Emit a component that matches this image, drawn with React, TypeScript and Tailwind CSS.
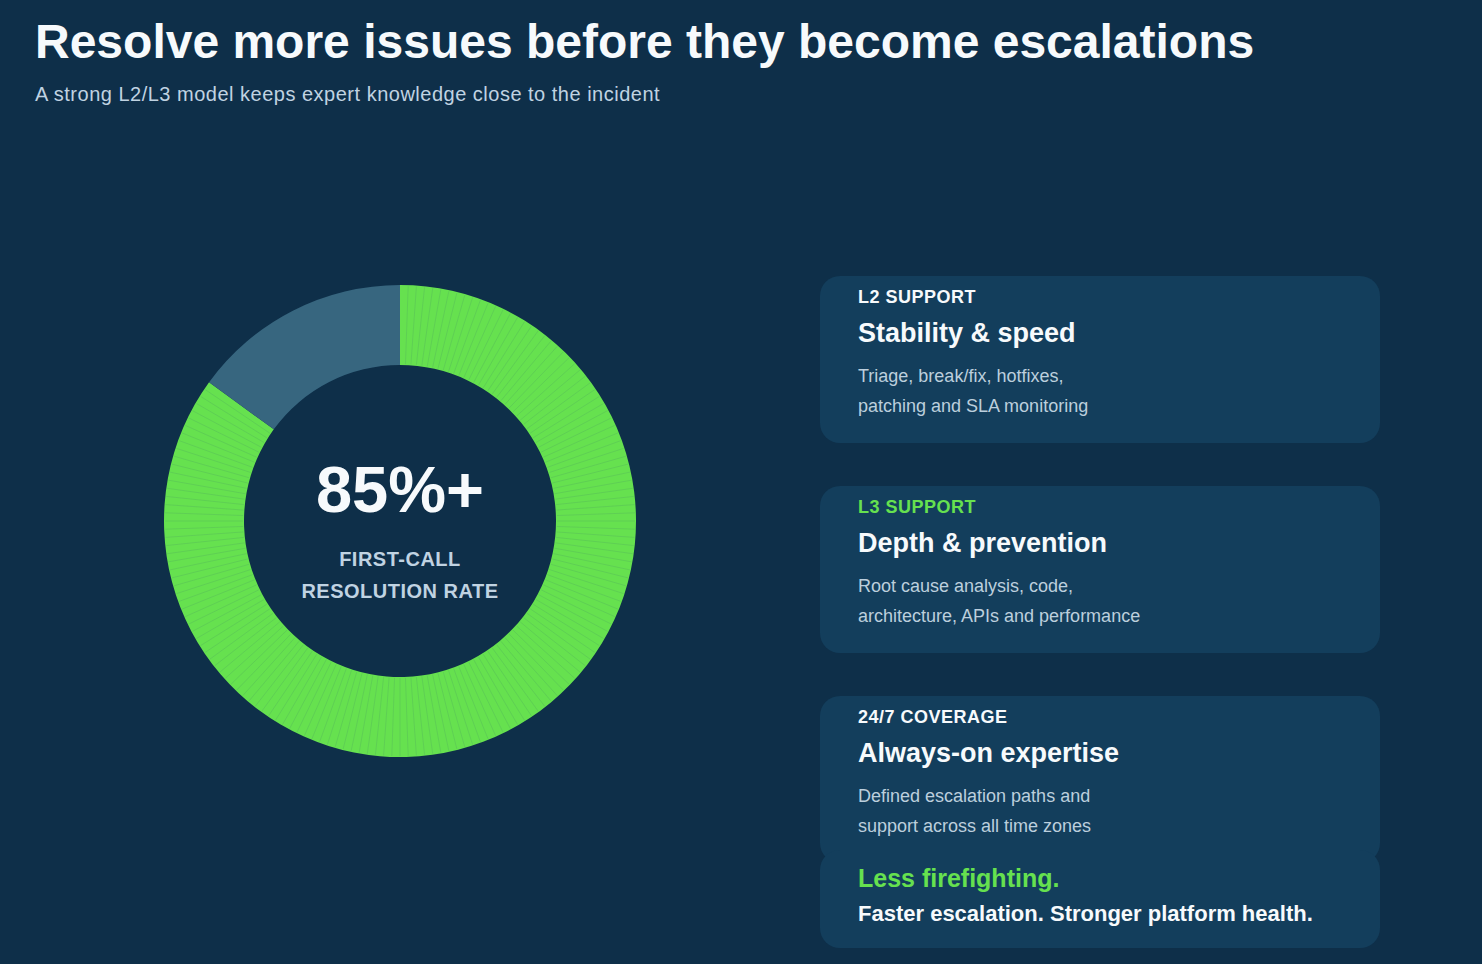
const GREEN = "#66e14f";
const GREY = "#37667f";

const polar = (r: number, deg: number) => {
  const a = (deg * Math.PI) / 180;
  return [236 + r * Math.sin(a), 236 - r * Math.cos(a)];
};

const arcPath = (r1: number, r2: number, start: number, end: number) => {
  const large = end - start > 180 ? 1 : 0;
  const [x1, y1] = polar(r2, start);
  const [x2, y2] = polar(r2, end);
  const [x3, y3] = polar(r1, end);
  const [x4, y4] = polar(r1, start);
  return `M${x1} ${y1} A${r2} ${r2} 0 ${large} 1 ${x2} ${y2} L${x3} ${y3} A${r1} ${r1} 0 ${large} 0 ${x4} ${y4} Z`;
};

const Donut = () => {
  const ticks = [];
  for (let a = 2; a < 306; a += 2) ticks.push(a);
  return (
    <div className="relative h-[472px] w-[472px] shrink-0">
      <svg width="472" height="472" viewBox="0 0 472 472">
        <path d={arcPath(156, 236, 0, 306)} fill={GREEN} />
        <path d={arcPath(156, 236, 306, 360)} fill={GREY} />
        {ticks.map((a) => {
          const [x1, y1] = polar(157, a);
          const [x2, y2] = polar(235, a);
          return (
            <line
              key={a}
              x1={x1}
              y1={y1}
              x2={x2}
              y2={y2}
              stroke="#4fae5c"
              strokeOpacity="0.5"
              strokeWidth="0.7"
            />
          );
        })}
      </svg>
      <div className="absolute inset-0 flex flex-col items-center justify-center pt-[22px]">
        <div className="text-[65px] font-bold leading-[65px] text-[#f7fafc]">85%+</div>
        <div className="mt-[21px] text-center text-[20px] font-bold leading-[32px] tracking-[0.5px] text-[#c0d3e2]">
          FIRST-CALL
          <br />
          RESOLUTION RATE
        </div>
      </div>
    </div>
  );
};

const cards = [
  {
    label: "L2 SUPPORT",
    green: false,
    title: "Stability & speed",
    lines: ["Triage, break/fix, hotfixes,", "patching and SLA monitoring"],
  },
  {
    label: "L3 SUPPORT",
    green: true,
    title: "Depth & prevention",
    lines: ["Root cause analysis, code,", "architecture, APIs and performance"],
  },
  {
    label: "24/7 COVERAGE",
    green: false,
    title: "Always-on expertise",
    lines: ["Defined escalation paths and", "support across all time zones"],
  },
];

const App = () => {
  return (
    <div className="min-h-screen w-full overflow-hidden bg-[#0e2f49] font-['Liberation_Sans',Arial,sans-serif]">
      <header className="px-[35px] pt-[18px]">
        <h1 className="text-[48px] font-bold leading-[48px] text-[#f7fafc]">
          Resolve more issues before they become escalations
        </h1>
        <p className="mt-[14px] text-[20px] leading-[28px] tracking-[0.5px] text-[#c0d3e2]">
          A strong L2/L3 model keeps expert knowledge close to the incident
        </p>
      </header>

      <main className="flex items-start">
        <div className="ml-[164px] mt-[177px]">
          <Donut />
        </div>

        <div className="ml-[184px] mt-[168px] flex w-[560px] flex-col gap-[43px]">
          {cards.map((c) => (
            <div key={c.label} className="rounded-[20px] bg-[#133e5c] pb-[22px] pl-[38px] pr-6 pt-[10px]">
              <div
                className={`text-[18px] font-bold leading-[22px] tracking-[0.5px] ${
                  c.green ? "text-[#66e14f]" : "text-[#f7fafc]"
                }`}
              >
                {c.label}
              </div>
              <div className="mt-[8px] text-[27px] font-bold leading-[34px] text-[#f7fafc]">{c.title}</div>
              <p className="mt-[11px] text-[18px] leading-[30px] text-[#bccfdd]">
                {c.lines[0]}
                <br />
                {c.lines[1]}
              </p>
            </div>
          ))}

          <div className="-mt-[56px] rounded-[20px] bg-[#133e5c] pb-[20px] pl-[38px] pr-6 pt-[13px]">
            <div className="text-[25px] font-bold leading-[30px] text-[#66e14f]">Less firefighting.</div>
            <div className="mt-[7px] text-[22px] font-bold leading-[28px] text-[#f7fafc]">
              Faster escalation. Stronger platform health.
            </div>
          </div>
        </div>
      </main>
    </div>
  );
};

export default App;
